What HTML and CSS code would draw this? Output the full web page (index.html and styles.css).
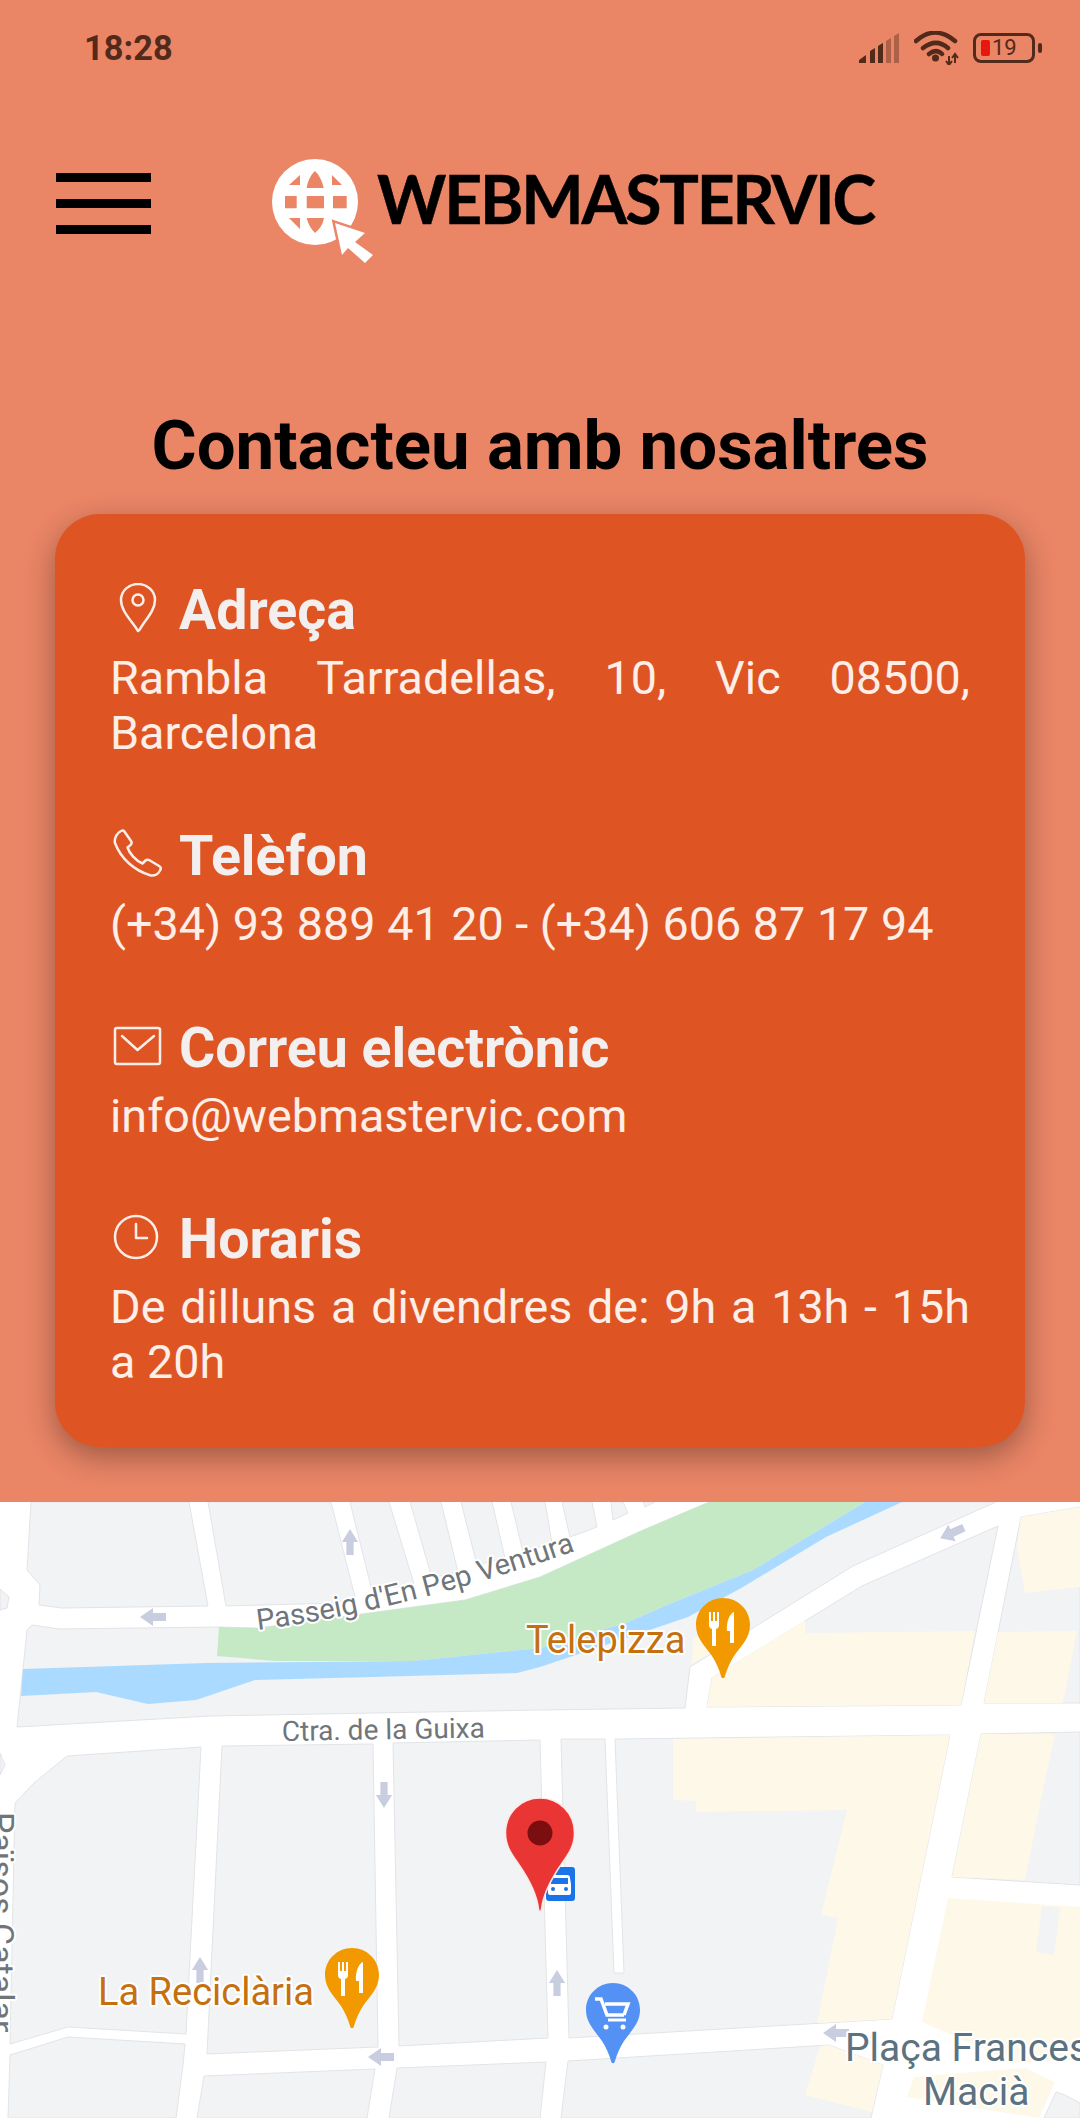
FILE: index.html
```html
<!DOCTYPE html>
<html lang="ca">
<head>
	<meta charset="UTF-8">
	<meta name="viewport" content="width=device-width, initial-scale=1">
	<title>Contacteu amb nosaltres - Webmastervic</title>
	<link rel="stylesheet" href="styles.css">
</head>
<body>
<div class="page">
	<div class="status">
		<span class="time">18:28</span>
		<div class="status-icons">
			<svg class="signal" width="40" height="30" viewBox="0 0 40 30">
				<path class="on" d="M0 30v-3l7-5v8zM11 30V18l5-3v15zM19 30V13l5-3v20z"/>
				<path class="off" d="M27 30V8l5-3v25zM35 30V3l5-3v30z"/>
			</svg>
			<svg class="wifi" width="46" height="34" viewBox="0 0 46 34">
				<path d="M2 10C14-1 28-1 41 10M9 17c9-7 17-7 25 0M15 23c5-4 9-4 13 0" />
				<circle cx="21.500" cy="27" r="3.500"/>
				<path class="tiny" d="M35 25v9M41 23v9M32 30l3 4 3-4M38 27l3-4 3 4"/>
			</svg>
			<div class="battery">
				<span class="battery-level"></span>
				<span class="battery-num">19</span>
			</div>
		</div>
	</div>

	<div class="nav">
		<div class="burger"><span></span><span></span><span></span></div>
		<svg class="mark" width="104" height="106" viewBox="270 158 104 106">
			<circle class="globe" cx="315" cy="202" r="43"/>
			<path class="cell" d="M285 196h11.700v12.300H285zM306.700 196H324v12.300h-17.300zM333 196h13.700v12.300H333zM289 185l11-10v10zM306.700 188c1-7 4-13 8.300-17 4.300 4 7.300 10 8.700 17zM332 175l10 10h-10zM289 218h11v11zM306.700 218H324c-1 6-4 11-9 15-4-4-7-9-8.300-15z"/>
			<polygon class="cursor" points="335,223 365,233 355,242 373,255 365,263 348,248 342,255"/>
		</svg>
		<span class="brand">WEBMASTERVIC</span>
	</div>

	<h1 class="title">Contacteu amb nosaltres</h1>

	<div class="card">
		<div class="item">
			<div class="item-head">
				<svg class="icon" width="50" height="50" viewBox="0 0 50 50">
					<path d="M25 48C18 37 8 28 8 17a17 16 0 0 1 34 0c0 11-10 20-15 29-.6 1.500-1.400 1.500-2 2z"/>
					<circle cx="25" cy="17" r="5.500"/>
				</svg>
				<h2>Adreça</h2>
			</div>
			<p>Rambla Tarradellas, 10, Vic 08500, Barcelona</p>
		</div>
		<div class="item">
			<div class="item-head">
				<svg class="icon" width="50" height="50" viewBox="0 0 50 50">
					<path d="M11 2l7 10c1 1.500.6 3-.5 4l-3 2.500c2 6 8 13 15 16l3-3c1-1 2.500-1 4-.3l10 6c1.500 1 1.500 2.500.7 4-2 4-6 6-10 5C22 42 8 30 2 14 1 9 4 4 8 2c1-.6 2.200-.7 3 0z"/>
				</svg>
				<h2>Telèfon</h2>
			</div>
			<p>(+34) 93 889 41 20 - (+34) 606 87 17 94</p>
		</div>
		<div class="item">
			<div class="item-head">
				<svg class="icon" width="50" height="50" viewBox="0 0 50 50">
					<rect x="2" y="7" width="45" height="36" rx="2"/>
					<path d="M9 15l15.500 14L41 15"/>
				</svg>
				<h2>Correu electrònic</h2>
			</div>
			<p>info@webmastervic.com</p>
		</div>
		<div class="item">
			<div class="item-head">
				<svg class="icon" width="50" height="50" viewBox="0 0 50 50">
					<circle cx="23" cy="25" r="21"/>
					<path d="M23 12v14h11"/>
				</svg>
				<h2>Horaris</h2>
			</div>
			<p>De dilluns a divendres de: 9h a 13h - 15h a 20h</p>
		</div>
	</div>

	<div class="map">
		<svg width="1080" height="616" viewBox="0 1502 1080 616">
			<defs>
				<path id="arrow" d="M-13 0L0-9v5h13v8H0v5z"/>
				<path id="drop" d="M0-27C15-27 27-15 27 0c0 13-9 21-16 31-4 6-7 13-9 20-.6 3-3.400 3-4 0-2-7-5-14-9-20C-18 21-27 13-27 0-27-15-15-27 0-27z"/>
				<g id="cutlery">
					<path d="M-14-13h2v9h2v-9h2v9h2v-9h2v13q0 3-3 4v17h-4V4q-3-1-3-4z"/>
					<path d="M11-13v31H7V6H4c-1-9 3-18 7-19z"/>
				</g>
				<clipPath id="side"><rect x="-14" y="1800" width="44" height="232"/></clipPath>
				<path id="passeig-line" d="M258 1630Q400 1612 584 1548"/>
			</defs>

			<!-- manzanas -->
			<g class="block">
				<polygon points="31,1502 27,1570 40,1585 39,1605 62,1608 208,1606 189,1502"/>
				<polygon points="208,1502 226,1606 336,1603 355,1597 331,1502"/>
				<polygon points="350,1502 372,1591 414,1584 389,1502"/>
				<polygon points="410,1502 432,1578 458,1572 441,1502"/>
				<polygon points="461,1502 477,1565 505,1558 492,1502"/>
				<polygon points="511,1502 523,1552 552,1543 545,1502"/>
				<polygon points="562,1502 570,1537 597,1527 592,1502"/>
				<polygon points="611,1502 613,1520 628,1513 623,1502"/>
				<polygon points="643,1502 655,1502 645,1507"/>
				<polygon points="0,1589 9,1597 7,1608 0,1610"/>
				<polygon points="0,1753 5,1765 0,1775"/>
				<polygon points="32,1625 27,1630 17,1727 210,1716 540,1710 685,1708 690,1667 853,1566 996,1502 709,1502 643,1530 540,1577 465,1600 258,1628 219,1627 59,1629"/>
				<polygon points="712,1678 707,1707 961,1705 998,1526 862,1586"/>
				<polygon points="1021,1517 984,1703 1080,1703 1080,1507"/>
				<polygon points="67,1756 201,1747 186,2034 68,2027 10,2044 15,1803 34,1783"/>
				<polygon points="222,1746 373,1744 378,2047 207,2054"/>
				<polygon points="393,1743 540,1740 548,2038 399,2046"/>
				<polygon points="561,1739 605,1739 614,1973 624,1973 615,1739 950,1735 892,2019 569,2038"/>
				<polygon points="981,1734 1080,1732 1080,1885 952,1877"/>
				<polygon points="10,2055 68,2037 185,2044 183,2065 176,2118 8,2118"/>
				<polygon points="204,2076 375,2069 367,2118 197,2118"/>
				<polygon points="397,2068 546,2062 540,2118 389,2118"/>
				<polygon points="568,2061 829,2045 883,2065 871,2118 561,2118"/>
				<polygon points="1056,2092 1065,2095 1080,2103 1080,2118 1044,2118"/>
			</g>

			<g class="built">
				<polygon points="712,1678 805,1620 805,1633 975,1631 961,1705 707,1707"/>
				<polygon points="1021,1517 1017,1547 1025,1593 1080,1587 1080,1507"/>
				<polygon points="998,1632 984,1703 1063,1703 1077,1631"/>
				<polygon points="673,1739 673,1800 696,1801 696,1812 847,1810 821,1915 838,1918 817,2023 892,2019 950,1735"/>
				<polygon points="981,1734 1055,1734 1041,1800 1025,1880 952,1877"/>
				<polygon points="948,1898 1080,1907 1080,2060 1015,2063 922,2022"/>
				<polygon points="914,2077 907,2097 1039,2118 1055,2082 1025,2068"/>
				<polygon points="820,2046 829,2045 883,2065 872,2112 805,2095"/>
				<polygon points="692,1664 693,1637 707,1637 716,1650"/>
			</g>
			<polygon class="block-flat" points="1042,1906 1060,1908 1054,1955 1036,1952"/>

			<polygon class="park" points="219,1627 258,1628 465,1600 540,1577 643,1530 709,1502 865,1502 753,1570 667,1605 626,1623 540,1648 413,1661 275,1661 217,1656"/>
			<polygon class="water" points="23,1669 207,1663 413,1661 540,1648 626,1623 667,1605 753,1570 865,1502 902,1502 826,1537 743,1587 688,1617 540,1667 517,1673 372,1677 255,1680 196,1700 148,1704 96,1692 21,1696"/>

			<g class="arrows">
				<use href="#arrow" transform="translate(350 1542) rotate(90) scale(1 .9)"/>
				<use href="#arrow" transform="translate(153 1617)"/>
				<use href="#arrow" transform="translate(384 1795) rotate(-90) scale(1 .9)"/>
				<use href="#arrow" transform="translate(952 1533) rotate(-24)"/>
				<use href="#arrow" transform="translate(200 1970) rotate(90) scale(1 .9)"/>
				<use href="#arrow" transform="translate(381 2057)"/>
				<use href="#arrow" transform="translate(557 1983) rotate(90) scale(1 .9)"/>
				<use href="#arrow" transform="translate(836 2033)"/>
			</g>

			<text class="street passeig"><textPath href="#passeig-line">Passeig d'En Pep Ventura</textPath></text>
			<text class="street" x="282" y="1741" transform="rotate(-1 282 1741)">Ctra. de la Guixa</text>
			<g clip-path="url(#side)">
				<text class="street side" transform="translate(-10 1812) rotate(90)">Països Catalans</text>
			</g>
			<text class="poi" x="526" y="1653">Telepizza</text>
			<text class="poi" x="98" y="2005">La Reciclària</text>
			<text class="place" x="845" y="2061">Plaça Francesc</text>
			<text class="place" x="923" y="2105">Macià</text>

			<g transform="translate(723 1625)">
				<use class="pin-food" href="#drop"/>
				<use class="pin-glyph" href="#cutlery"/>
			</g>
			<g transform="translate(352 1975)">
				<use class="pin-food" href="#drop"/>
				<use class="pin-glyph" href="#cutlery"/>
			</g>
			<g transform="translate(613 2010)">
				<use class="pin-shop" href="#drop"/>
				<path class="cart" d="M-18-11h6l6 16h17M-8-6h23l-4 11"/>
				<path class="cart thin" d="M-5 10h18"/>
				<circle class="pin-glyph" cx="-7" cy="17" r="2.500"/>
				<circle class="pin-glyph" cx="10" cy="17" r="2.500"/>
			</g>

			<rect class="bus-bg" x="546" y="1867" width="29" height="34" rx="3"/>
			<path class="pin-glyph" d="M549 1878c0-2 1-3 3-3h15c2 0 3 1 3 3l1 6v9c0 1-1 2-2 2h-19c-1 0-2-1-2-2v-9z"/>
			<rect class="bus-bg" x="551" y="1878" width="17" height="6"/>
			<circle class="bus-bg" cx="553" cy="1889" r="2"/>
			<circle class="bus-bg" cx="566" cy="1889" r="2"/>

			<path class="pin-red" d="M540 1798c19 0 34.500 15 34.500 35 0 13-6 21-13 31-9 13-18 28-20 45-.3 3-2.700 3-3 0-2-17-11-32-20-45-7-10-13-18-13-31 0-20 15.500-35 34.500-35z"/>
			<circle class="pin-dot" cx="540" cy="1833" r="12.500"/>
		</svg>
	</div>
</div>
</body>
</html>
```

FILE: styles.css
```css
html, body {
	margin: 0;
	padding: 0;
}
body {
	background-color: #ea8566;
	font-family: Roboto, sans-serif;
}
.page {
	width: 1080px;
	height: 2118px;
	overflow: hidden;
}

/* status bar */
.status {
	display: flex;
	justify-content: space-between;
	align-items: center;
	height: 96px;
	padding: 0 39px 0 84px;
	color: #522a1b;
}
.time {
	font-size: 34.400px;
	font-weight: 700;
}
.status-icons {
	display: flex;
	align-items: center;
}
.signal {
	fill: #522a1b;
	margin-right: 15px;
}
.signal .off {
	opacity: .4;
}
.wifi {
	margin-right: 13px;
	fill: #522a1b;
	stroke: #522a1b;
}
.wifi path {
	fill: none;
	stroke-width: 4.500;
	stroke-linecap: round;
}
.wifi circle {
	stroke: none;
}
.wifi .tiny {
	stroke-width: 2;
	stroke-linecap: butt;
}
.battery {
	position: relative;
	display: flex;
	align-items: center;
	box-sizing: border-box;
	width: 62px;
	height: 30px;
	padding-left: 5px;
	border: 3px solid #522a1b;
	border-radius: 8px;
	margin-right: 6px;
}
.battery::after {
	content: "";
	position: absolute;
	right: -10px;
	top: 7px;
	width: 4px;
	height: 10px;
	border-radius: 2px;
	background-color: #522a1b;
}
.battery-level {
	width: 9px;
	height: 16px;
	background-color: #e8170f;
	border-radius: 2px;
	margin-right: 2px;
}
.battery-num {
	font-size: 22px;
	line-height: 22px;
	font-weight: 400;
}

/* logo row */
.nav {
	display: flex;
	align-items: flex-start;
	padding: 62px 0 0 56px;
}
.burger {
	width: 95px;
	margin: 15px 119px 0 0;
}
.burger span {
	display: block;
	height: 9px;
	margin-bottom: 17px;
	background-color: #000;
}
.globe {
	fill: #fff;
}
.cell {
	fill: #ea8566;
}
.cursor {
	fill: #fff;
	stroke: #ea8566;
	stroke-width: 5px;
	paint-order: stroke;
}
.brand {
	margin: 3px 0 0 3px;
	font-family: Lato, sans-serif;
	font-size: 66px;
	line-height: 76px;
	font-weight: 700;
	color: #000;
	letter-spacing: -2.150px;
	-webkit-text-stroke: .5px #000;
}

.title {
	margin: 144px 0 30px;
	font-size: 69px;
	line-height: 76px;
	font-weight: 700;
	text-align: center;
	color: #000;
}

/* contact card */
.card {
	box-sizing: border-box;
	margin: 0 55px 55px;
	height: 933px;
	padding: 65.500px 55px 0;
	border-radius: 45px;
	background-color: #de5523;
	box-shadow: 0 10px 30px rgba(0, 0, 0, .33);
}
.item {
	margin-bottom: 65.500px;
}
.item-head {
	display: flex;
	align-items: center;
	height: 62px;
	margin-bottom: 9px;
}
.item-head h2 {
	margin: 0;
	font-size: 55.500px;
	line-height: 62px;
	font-weight: 700;
	color: #f3efee;
}
.icon {
	flex: none;
	margin: 0 16px 6px 3px;
	fill: none;
	stroke: #fbeee9;
	stroke-width: 2.500;
	stroke-linejoin: round;
	stroke-linecap: round;
}
.item p {
	margin: 0;
	font-size: 46.700px;
	line-height: 55px;
	font-weight: 400;
	text-align: justify;
	color: #fdeee8;
}

/* map */
.map {
	height: 616px;
	background-color: #fff;
}
.map svg {
	display: block;
}
.block polygon {
	fill: #f1f3f4;
	stroke: #e2e4e8;
	stroke-width: 1;
}
.block-flat {
	fill: #f1f3f4;
}
.built polygon {
	fill: #fef8e9;
}
.park {
	fill: #c5e8c5;
}
.water {
	fill: #aadaff;
}
.arrows {
	fill: #c8cde0;
}
.street, .poi, .place {
	font-family: Roboto, sans-serif;
	paint-order: stroke;
	stroke: #fff;
	stroke-width: 4px;
	stroke-linejoin: round;
}
.street {
	font-size: 28px;
	fill: #70757a;
}
.passeig {
	font-size: 29px;
}
.side {
	font-size: 34px;
}
.poi {
	font-size: 38px;
	fill: #c5700f;
}
.place {
	font-size: 39px;
	fill: #5b7280;
}
.pin-food {
	fill: #f29900;
}
.pin-shop {
	fill: #5491f5;
}
.pin-glyph {
	fill: #fff;
}
.cart {
	fill: none;
	stroke: #fff;
	stroke-width: 3.500;
}
.cart.thin {
	stroke-width: 3;
}
.bus-bg {
	fill: #1a73e8;
}
.pin-red {
	fill: #ea3535;
	stroke: #fbe9e7;
	stroke-width: 1.500;
}
.pin-dot {
	fill: #7b0f0f;
}
```
